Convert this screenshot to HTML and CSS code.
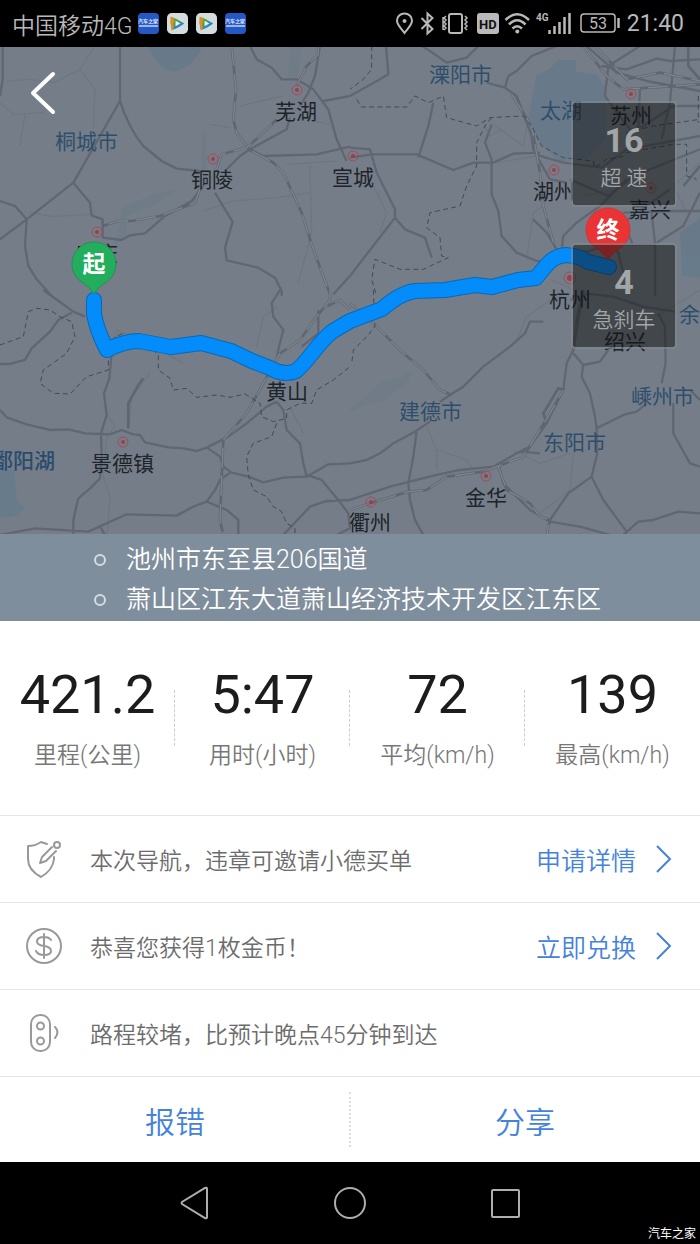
FILE: index.html
```
<!DOCTYPE html>
<html lang="zh-CN">
<head>
<meta charset="utf-8">
<meta name="viewport" content="width=device-width, initial-scale=1">
<title>行程报告</title>
<link rel="stylesheet" href="styles.css">
</head>
<body>
<div class="screen">
  <header class="status">
    <span class="carrier">中国移动4G</span>
    <span class="badge">汽车之家<i></i></span>
    <svg class="app" viewBox="0 0 22 22"><rect width="22" height="22" rx="5" fill="#d5dce0"/><path d="M4 4Q11 6 18 11Q11 16 5 18Q3 11 4 4z" fill="#48a63c"/><path d="M4 4L8 6Q6 11 7 17L5 18Q3 11 4 4z" fill="#e58a25"/><path d="M7 17Q13 15 18 11L13 9L8 13z" fill="#2589cf"/><path d="M9 8l5 3-5 3z" fill="#eef2f3"/></svg>
    <svg class="app" viewBox="0 0 22 22"><rect width="22" height="22" rx="5" fill="#d5dce0"/><path d="M4 4Q11 6 18 11Q11 16 5 18Q3 11 4 4z" fill="#48a63c"/><path d="M4 4L8 6Q6 11 7 17L5 18Q3 11 4 4z" fill="#e58a25"/><path d="M7 17Q13 15 18 11L13 9L8 13z" fill="#2589cf"/><path d="M9 8l5 3-5 3z" fill="#eef2f3"/></svg>
    <span class="badge">汽车之家<i></i></span>
    <svg class="sys" viewBox="394 10 227 28" fill="none" stroke="#b9b9b9" stroke-width="2">
      <path d="M404.500 33C401 28 397 25 397 20.500a7.500 7 0 0 1 15 0C412 25 408 28 404.500 33z"/><circle cx="404.500" cy="21" r="2" fill="#b9b9b9" stroke="none"/>
      <path d="M421.500 18l11 11-5 4.500V13.500l5 4.500-11 11"/>
      <rect x="449" y="14" width="13" height="19" rx="2"/><path d="M446 16l-2 2 2 2-2 2 2 2-2 2 2 2-2 2M443 17v13M465 16l2 2-2 2 2 2-2 2 2 2-2 2 2 2" stroke-width="1.500"/>
      <rect x="477" y="13" width="22" height="21" rx="3" fill="#b9b9b9" stroke="none"/><text x="479" y="29" font-size="13" font-weight="700" fill="#111" stroke="none">HD</text>
      <path d="M505.500 20Q517 8.500 529 20M509 24.500Q517 16 525.500 24.500M512.500 28.500Q517 24 522 28.500" stroke-width="2.500"/><circle cx="517.300" cy="31.500" r="2" fill="#b9b9b9" stroke="none"/>
      <text x="536" y="21" font-size="10" font-weight="700" fill="#b9b9b9" stroke="none">4G</text>
      <path d="M549.500 30v4M554.500 26v8M559.500 22v12M564.500 17v17M569.500 13v21" stroke-width="2.500"/>
      <rect x="581" y="14" width="34" height="18" rx="3" stroke-width="1.500"/><path d="M618.500 18v10" stroke-width="2.500"/><text x="589" y="29" font-size="16" font-weight="400" fill="#b9b9b9" stroke="none">53</text>
    </svg>
    <time class="clock">21:40</time>
  </header>

  <main>
    <section class="map">
      <svg class="map-art" viewBox="0 47 700 487" role="img" aria-label="行程路线地图">
        <rect y="47" width="700" height="487" fill="#757e88"/>
        <g class="water">
          <path d="M148 47h54q-8 20-28 25q-16-2-26-25z"/>
          <path d="M536 76l14-8 8-8h18v12l20 2 10 14v50l-18 20-28 4-18-16-14-26z"/>
          <path d="M680 232l20-14v60l-18-2zM0 468l14 2 3 30 8 8-8 8-17 2z"/>
          <path d="M350 408q20-14 30-26l18-4 14-8-4 12-22 18-18 4-18 8z" opacity=".4"/>
          <path d="M122 208l30-14 25-4-20 14-30 12v22l-12 6z" opacity=".4"/>
          <path d="M290 47h12l-4 30h-10zM202 130h5v36l-6 6z" opacity=".4"/>
        </g>

        <g transform="translate(0 46) scale(.3333)">
          <g class="faint">
            <path d="M285 0L240 70 160 110 90 100 20 105M240 70L285 130 280 250M0 170L40 205 130 200M75 205L60 300M90 500L160 512 270 505M610 495L700 465 830 455 930 440M860 355L1010 345M930 360L935 560 895 710M720 180L850 150M630 235L690 245M940 225L990 235"/>
          </g>
          <g class="road">
            <path d="M8 0V100L0 150M360 0V165L220 410 80 520 0 580M360 165Q385 245 430 300L485 345 530 368 600 375M220 410L270 470 275 508 308 520V575L365 582 390 568 435 562 495 510 575 465 610 420M0 465L45 480 80 520 75 600 85 660 110 700 155 750M645 440L698 528 675 605 680 643 775 665 825 695 845 735V750M750 0L770 40 815 65 845 100H890L940 130 985 190 1010 280 1040 345M960 0L945 90 925 140 900 180M970 165L1050 150M675 375L720 330 750 310 860 250 870 215M750 310L790 330 950 325 1050 302M1000 745L1050 690"/>
          </g>
          <g class="rail">
            <path d="M695 0L708 130 700 220 710 260 750 312 820 350 850 380 905 500 940 610 990 745M650 370L665 325 740 305 780 270 830 220M600 430L585 470 480 510 395 525 355 525 308 540M890 120L920 60 955 25V0"/>
          </g>
          <g class="rail-core">
            <path d="M695 0L708 130 700 220 710 260 750 312 820 350 850 380 905 500 940 610 990 745M650 370L665 325 740 305 780 270 830 220M600 430L585 470 480 510 395 525 355 525 308 540M890 120L920 60 955 25V0"/>
          </g>
        </g>

        <g transform="translate(350 46) scale(.3333)">
          <g class="faint">
            <path d="M400 230L420 270 455 250M430 235L520 300 530 240M440 350L560 330M700 450L800 430M530 640L550 500 580 480M600 700L670 730M70 420L110 500 90 560M1050 350L970 420 1010 500"/>
          </g>
          <g class="road">
            <path d="M108 0L115 85 90 100 0 150M215 0L240 15 290 50 350 35 385 0M620 0L545 30 500 75 475 90 465 125M410 110L465 125 500 150 545 270 550 310 570 330 640 350 755 365 830 310 1050 270M0 305L60 310 80 380 135 490V515L0 690M0 335L65 325H200L310 372 370 350 430 350 490 323 570 320M250 170L235 240 205 335M135 515L165 550 225 575 245 635M425 235L405 290 425 340V445L445 495 455 570 500 620 560 645H600M755 60L830 70 920 38 960 45 1050 40M710 0L800 80 890 105 1050 135M870 0L775 60 765 150 800 200 850 260M975 0L960 170 935 280M870 125L865 250 970 180H1050M635 610L640 570 680 530 750 480 830 400M660 400L775 450 850 390 1050 310M820 500L980 495H1050M850 600L820 530 960 430M1050 440L1000 540 920 590"/>
            <path d="M670 630L780 595 805 620 820 680M750 595H910L915 590V750M560 330L600 400 650 410M550 520L590 560 620 610M905 500L915 590"/>
          </g>
          <g class="rail">
            <path d="M485 145L545 240 570 380 580 480 610 590M700 0L770 90 820 130 1050 115M735 0L830 100 930 80 1050 105M1015 0V60L1050 100M1050 360L1000 420"/>
          </g>
          <g class="rail-core">
            <path d="M485 145L545 240 570 380 580 480 610 590M700 0L770 90 820 130 1050 115M735 0L830 100 930 80 1050 105"/>
          </g>
          <g class="border">
            <path d="M65 0V70L40 100 0 130M20 160L35 183H170L195 150 235 170 280 150 290 215 380 240 420 215 520 210 545 240 575 300 640 335 730 345 735 365 770 340 830 330M425 215L405 240 380 290V360L350 420 330 480 240 500 230 545 270 575 275 630 295 635 220 670H150L75 640 65 700 80 750M830 260L910 240 1050 220M1045 150V230M830 320L970 295H1010V390L1040 400"/>
          </g>
        </g>

        <g transform="translate(0 290) scale(.3333)">
          <g class="faint">
            <path d="M340 200L350 120 460 170 550 220M325 380L345 410 320 440 310 560 330 620 320 750M385 415L395 320 450 250M770 170L790 80 830 50M870 350L910 430M950 640L1050 630"/>
          </g>
          <g class="road">
            <path d="M130 0L220 65 255 80M215 68L175 90 150 125 95 175 75 210 30 222H0M335 190L328 265 312 310 320 375 303 430 305 500 300 565 270 595 235 625 220 690V735M0 360L20 382 80 403 150 420 205 418 255 430 330 433 365 420 400 433 420 435 435 457 505 472 550 475 590 483 620 473 685 440 740 400 800 350 830 335M0 735L105 715 265 725 380 673 530 677 580 650 620 635 645 600 660 570 695 545M840 0L815 40 820 80 850 120 835 180 830 210M620 473L660 500 670 530 695 548 745 560 790 577 850 563 920 560 985 523 1050 520M830 335L850 360 860 420 900 460 910 520 920 560M920 555L965 570 1015 630 1045 670 1050 715 1010 735M620 635L680 660 715 690V735M1050 630L980 633 930 650 850 735M300 710L315 735M955 60V130L905 170"/>
          </g>
          <g class="rail">
            <path d="M990 0V30L950 80 900 150 840 190 790 280 740 370 670 450 660 690 670 735M1050 60L1020 30 980 50M385 415V340L415 285 430 265"/>
          </g>
          <g class="rail-core">
            <path d="M990 0V30L950 80 900 150 840 190 790 280 740 370 670 450 660 690 670 735M1050 60L1020 30 980 50"/>
          </g>
          <g class="border">
            <path d="M0 165L70 140 85 65 110 55 150 60 180 80 215 95 225 140 200 190 130 240 120 280 160 310 210 312 260 260 325 240V190L345 140 370 130M440 160L475 195V240L510 265 520 300 560 295 590 322 650 315 690 322 735 312 780 340 785 380 820 395 860 385V360L900 340 935 340 950 300 1000 270 1050 230M830 400L815 440 760 460 740 500 745 555 760 600 800 620 820 650 845 665 860 700 885 715V735"/>
          </g>
        </g>

        <g transform="translate(350 290) scale(.3333)">
          <g class="faint">
            <path d="M230 410L260 480V540M260 480L350 510 370 540M490 480L570 520 660 490M670 490L660 600 570 670M500 150L530 80 600 30M1050 0L900 90"/>
          </g>
          <g class="road">
            <path d="M580 95L540 95 525 130 480 170 400 230 340 290 300 315 270 335M240 395L195 425 130 460 90 490 50 510 0 520M200 425L190 500 175 580 180 630 195 690 220 735M0 630L120 590 260 555 330 540 430 530 500 490 540 470 590 400 640 300 650 220 670 180 690 60 700 0M670 190L700 225 695 260 720 310 735 380 740 415 820 375 860 365 890 340M700 225L750 215 775 180M740 415L742 490 725 560 655 610 600 690M725 560L760 630 830 725M445 520L460 580 540 660 600 695 690 710 780 735M820 735L865 695 910 690 985 665 1050 670M700 10L790 20 880 50 975 65M925 70L945 110 947 220 935 280M970 340V430L1020 520 1050 530M510 485L570 490M1020 300L1050 330"/>
          </g>
          <g class="rail">
            <path d="M0 40L70 100 160 190 220 240 270 300 305 315M0 660L60 640 175 605 230 600 290 560 400 545 520 500 545 460 600 370 640 300 625 295 580 370 590 400M445 530L470 600 540 640 570 680 600 690 590 735M700 0L680 90 670 180"/>
          </g>
          <g class="rail-core">
            <path d="M0 40L70 100 160 190 220 240 270 300 305 315M0 660L60 640 175 605 230 600 290 560 400 545 520 500 545 460 600 370 640 300M445 530L470 600 540 640 570 680 600 690 590 735"/>
          </g>
          <g class="border"><path d="M70 0L75 110 50 140 10 180 5 220"/></g>
        </g>

        <g class="label">
          <text x="275" y="119">芜湖</text><text x="191" y="187">铜陵</text><text x="332" y="185">宣城</text><text x="533" y="199">湖州</text><text x="610" y="123">苏州</text><text x="629" y="217">嘉兴</text><text x="76" y="261">安庆</text><text x="549" y="307">杭州</text><text x="604" y="349">绍兴</text><text x="266" y="399">黄山</text><text x="91" y="471">景德镇</text><text x="465" y="505">金华</text><text x="349" y="530">衢州</text>
        </g>
        <g class="label minor">
          <text x="55" y="149">桐城市</text><text x="429" y="82">溧阳市</text><text x="540" y="118">太湖</text><text x="399" y="419">建德市</text><text x="543" y="450">东阳市</text><text x="631" y="404">嵊州市</text><text x="679" y="322">余姚</text>
        </g>
        <text class="lake" x="-8" y="468">鄱阳湖</text>
        <g class="city-ring">
          <circle cx="297" cy="90" r="5"/><circle cx="213" cy="159" r="5"/><circle cx="353" cy="156" r="5"/><circle cx="97" cy="232" r="5"/><circle cx="554" cy="170" r="5"/><circle cx="631" cy="94" r="5"/><circle cx="651" cy="188" r="5"/><circle cx="570" cy="278" r="6"/><circle cx="123" cy="442" r="5"/><circle cx="486" cy="476" r="5"/><circle cx="371" cy="502" r="5"/>
        </g>
        <g class="city-dot">
          <circle cx="297" cy="90" r="2"/><circle cx="213" cy="159" r="2"/><circle cx="353" cy="156" r="2"/><circle cx="97" cy="232" r="2"/><circle cx="554" cy="170" r="2"/><circle cx="631" cy="94" r="2"/><circle cx="651" cy="188" r="2"/><circle cx="570" cy="278" r="3"/><circle cx="123" cy="442" r="2"/><circle cx="486" cy="476" r="2"/><circle cx="371" cy="502" r="2"/>
        </g>
        <path class="route-edge" d="M94 300V314Q97 331 107 350Q124 341 139 341L171 347L201 343L231 351L252 361L270 368Q284 376 296 371C308 362 318 342 333 331L350 321L382 309Q400 293 415 291L445 290L475 285L492 287L518 280L536 278C546 266 551 256 566 255Q580 256 588 262L609 267"/>
        <path class="route" d="M94 300V314Q97 331 107 350Q124 341 139 341L171 347L201 343L231 351L252 361L270 368Q284 376 296 371C308 362 318 342 333 331L350 321L382 309Q400 293 415 291L445 290L475 285L492 287L518 280L536 278C546 266 551 256 566 255Q580 256 588 262L609 267"/>
        <path d="M94 294Q90 287 79 280A22 22 0 1 1 109 280Q98 287 94 294z" fill="#22ae5c" stroke="#278e57"/>
        <text class="pin" x="94" y="272">起</text>
        <path d="M608 260Q604 253 593 246A22 22 0 1 1 623 246Q612 253 608 260z" fill="#e93335" stroke="#c23b42"/>
        <text class="pin" x="608" y="238">终</text>
      </svg>
      <button class="back" aria-label="返回"><svg viewBox="0 0 28 48" fill="none" stroke="#fff" stroke-width="4" stroke-linecap="round" stroke-linejoin="round"><path d="M24 4L4 23 24 42"/></svg></button>
      <div class="alerts">
        <div class="alert"><strong>16</strong><span>超 速</span></div>
        <div class="alert"><strong>4</strong><span>急刹车</span></div>
      </div>
    </section>

    <ul class="places">
      <li>池州市东至县206国道</li>
      <li>萧山区江东大道萧山经济技术开发区江东区</li>
    </ul>

    <section class="stats">
      <div class="stat"><strong>421.2</strong><span>里程(公里)</span></div>
      <div class="stat"><strong>5:47</strong><span>用时(小时)</span></div>
      <div class="stat"><strong>72</strong><span>平均(km/h)</span></div>
      <div class="stat"><strong>139</strong><span>最高(km/h)</span></div>
    </section>

    <section class="notes">
      <div class="note">
        <svg class="note-icon" viewBox="0 0 36 40" fill="none" stroke="#999" stroke-width="2" stroke-linecap="round" stroke-linejoin="round"><path d="M21 5L15 3Q9 7 2 7V20Q2 31 15 38Q27 31 28 20V18M26 8L16 18 14 24 20 22 30 12"/><circle cx="31" cy="6" r="3"/></svg>
        <p>本次导航，违章可邀请小德买单</p>
        <a href="#apply">申请详情<svg class="arrow" viewBox="0 0 16 28"><path d="M1 1l13 13L1 27"/></svg></a>
      </div>
      <div class="note">
        <svg class="note-icon" viewBox="0 0 36 40" fill="none" stroke="#999" stroke-width="2" stroke-linecap="round"><circle cx="18" cy="20" r="17"/><path d="M25 14Q23 11 18 11Q11 11 11 15.500Q11 19 18 20Q25 21 25 25Q25 29 18 29Q12 29 10 25M18 8V32"/></svg>
        <p>恭喜您获得1枚金币！</p>
        <a href="#redeem">立即兑换<svg class="arrow" viewBox="0 0 16 28"><path d="M1 1l13 13L1 27"/></svg></a>
      </div>
      <div class="note">
        <svg class="note-icon" viewBox="0 0 36 40" fill="none" stroke="#999" stroke-width="2" stroke-linecap="round"><rect x="5" y="2" width="19" height="36" rx="9"/><circle cx="14.500" cy="13" r="3.500"/><circle cx="14.500" cy="28" r="3.500"/><path d="M29 14Q34 19 29 25"/></svg>
        <p>路程较堵，比预计晚点45分钟到达</p>
      </div>
    </section>

    <div class="actions">
      <button>报错</button>
      <button>分享</button>
    </div>
  </main>

  <nav class="navbar">
    <button aria-label="后退"><svg viewBox="0 0 34 34"><path d="M30 3V31Q30 33 28 32L5 18Q4 17 5 16L28 2Q30 1 30 3z"/></svg></button>
    <button aria-label="主屏幕"><svg viewBox="0 0 34 34"><circle cx="17" cy="17" r="15"/></svg></button>
    <button aria-label="最近任务"><svg viewBox="0 0 34 34"><rect x="3" y="4" width="27" height="27" rx="1"/></svg></button>
    <span class="watermark">汽车之家</span>
  </nav>
</div>
</body>
</html>
```

FILE: styles.css
```
*, *::before { box-sizing: border-box; }
body {
  margin: 0;
  background: #fff;
  font-family: Roboto, "Noto Sans CJK SC", sans-serif;
  font-weight: 350;
}
p, ul { margin: 0; padding: 0; }
button { font: inherit; border: 0; background: none; padding: 0; cursor: pointer; }
.screen { min-height: 100vh; display: flex; flex-direction: column; }
main { flex: 1; display: flex; flex-direction: column; }

.status {
  height: 47px;
  padding: 0 16px 0 12px;
  display: flex;
  align-items: center;
  gap: 8px;
  background: #000;
  color: #b9b9b9;
  font-size: 23px;
}
.carrier { white-space: nowrap; margin-right: -3px; }
.badge {
  width: 21px;
  height: 21px;
  border-radius: 4px;
  background: #2458c4;
  color: #e8eefc;
  font-size: 5px;
  font-weight: 700;
  line-height: 7px;
  text-align: center;
  padding-top: 5px;
  overflow: hidden;
  white-space: nowrap;
}
.badge i { display: block; height: 2px; margin: 0 1px; background: #9db6e8; }
.app { width: 21px; height: 21px; }
.sys { width: 227px; height: 28px; margin-left: auto; }
.clock { font-size: 23px; font-weight: 400; margin-left: -2px; }

.map { position: relative; background: #757e88; }
.map-art { display: block; width: 100%; height: auto; }
.water { fill: #657a8b; opacity: .8; }
.faint path { fill: none; stroke: #6e7781; stroke-width: 4; }
.road path { fill: none; stroke: #606773; stroke-width: 7; stroke-linejoin: round; }
.rail path { fill: none; stroke: #5f6670; stroke-width: 8; }
.rail-core path { fill: none; stroke: #7d858e; stroke-width: 4; stroke-dasharray: 60 24; }
.border path { fill: none; stroke: #424a54; stroke-width: 3; stroke-dasharray: 15 10; }
.label { font-size: 21px; font-weight: 400; fill: #1e242b; }
.minor { fill: #2f4e6c; }
.lake { font-size: 21px; font-weight: 500; fill: #294b6d; }
.city-ring { fill: none; stroke: #a24c57; stroke-width: 1; }
.city-dot { fill: #a23b48; }
.route, .route-edge { fill: none; stroke-linejoin: round; stroke-linecap: round; }
.route-edge { stroke: #0869b8; stroke-width: 16; }
.route { stroke: #048cfb; stroke-width: 14; }
.pin { font-size: 23px; font-weight: 700; fill: #fff; text-anchor: middle; }

.back { position: absolute; left: 29px; top: 23px; width: 28px; height: 48px; }
.back svg { display: block; width: 100%; }
.alerts {
  position: absolute;
  right: 23px;
  top: 54px;
  display: flex;
  flex-direction: column;
  gap: 36px;
}
.alert {
  width: 106px;
  height: 106px;
  padding-top: 19px;
  border: 2px solid rgba(130, 136, 142, .6);
  border-radius: 4px;
  background: rgba(16, 16, 16, .5);
  background-clip: padding-box;
  color: #a3a6a9;
  text-align: center;
}
.alert strong { display: block; font-size: 34px; line-height: 36px; font-weight: 700; }
.alert span { display: block; font-size: 21px; line-height: 40px; }

.places {
  list-style: none;
  height: 87px;
  padding: 6px 16px 0 94px;
  background: #7f8e9d;
  color: #fff;
  font-size: 25px;
  line-height: 40px;
}
.places li { display: flex; align-items: center; gap: 20px; white-space: nowrap; }
.places li::before {
  content: "";
  width: 12px;
  height: 12px;
  flex: none;
  border: 2px solid #d3dbe3;
  border-radius: 50%;
}

.stats {
  height: 194px;
  padding-top: 39px;
  display: grid;
  grid-template-columns: repeat(4, 1fr);
}
.stat { position: relative; text-align: center; }
.stat + .stat::before {
  content: "";
  position: absolute;
  left: -1px;
  top: 30px;
  height: 56px;
  border-left: 1px dashed #ccc;
}
.stat strong { display: block; font-size: 54px; line-height: 70px; font-weight: 400; color: #1c1c1c; }
.stat span { display: block; margin-top: 8px; font-size: 23px; line-height: 36px; color: #777; }

.note {
  height: 87px;
  padding: 0 28px 0 26px;
  display: flex;
  align-items: center;
  border-top: 1px solid #e5e5e5;
  color: #6c6c6c;
  font-size: 23px;
}
.note-icon { width: 36px; height: 40px; margin-right: 28px; flex: none; }
.note p { flex: 1; white-space: nowrap; }
.note a {
  display: flex;
  align-items: center;
  gap: 20px;
  color: #4482dc;
  font-size: 25px;
  text-decoration: none;
}
.arrow { width: 16px; height: 28px; fill: none; stroke: #4482dc; stroke-width: 2; }

.actions {
  flex: 1;
  min-height: 86px;
  display: grid;
  grid-template-columns: 1fr 1fr;
  border-top: 1px solid #e5e5e5;
}
.actions button { position: relative; color: #4482dc; font-size: 30px; }
.actions button + button::before {
  content: "";
  position: absolute;
  left: -1px;
  top: 15px;
  bottom: 15px;
  border-left: 2px dotted #ddd;
}

.navbar {
  position: relative;
  height: 82px;
  background: #000;
  display: flex;
  align-items: center;
  justify-content: center;
  gap: 122px;
}
.navbar svg { display: block; width: 34px; height: 34px; fill: none; stroke: #aeaeae; stroke-width: 2; }
.watermark { position: absolute; right: 4px; bottom: 3px; color: #fff; font-size: 12px; font-weight: 400; }
```
